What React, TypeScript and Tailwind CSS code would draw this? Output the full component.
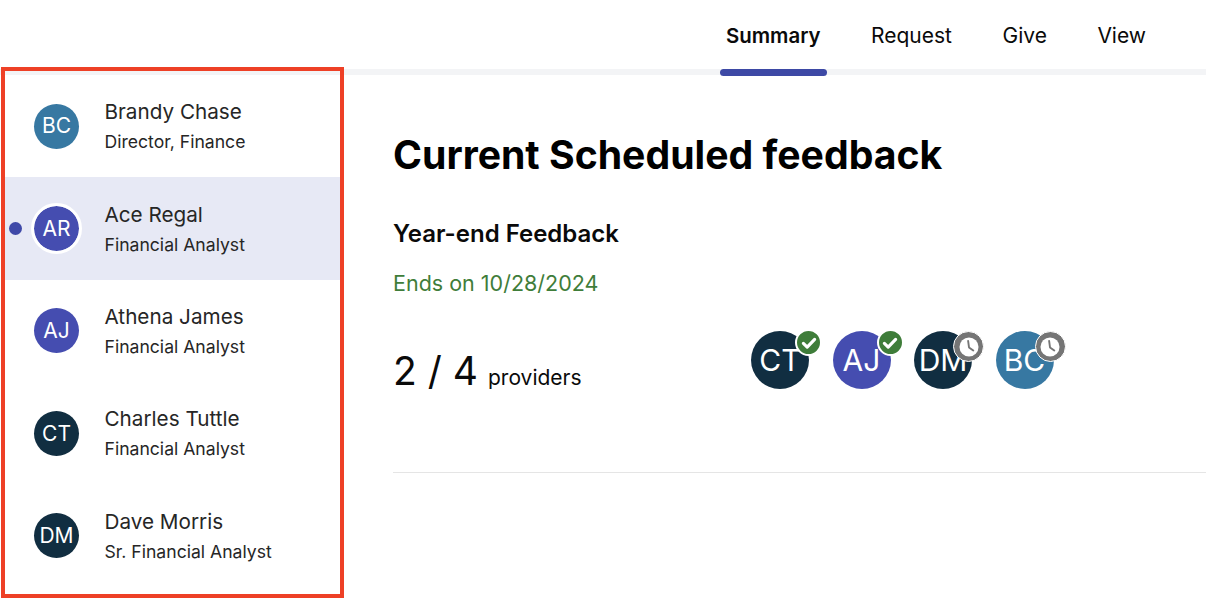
const people = [
  { i: "BC", name: "Brandy Chase", role: "Director, Finance", color: "bg-[#3778a2]", active: false },
  { i: "AR", name: "Ace Regal", role: "Financial Analyst", color: "bg-[#454db0]", active: true },
  { i: "AJ", name: "Athena James", role: "Financial Analyst", color: "bg-[#454db0]", active: false },
  { i: "CT", name: "Charles Tuttle", role: "Financial Analyst", color: "bg-[#112e41]", active: false },
  { i: "DM", name: "Dave Morris", role: "Sr. Financial Analyst", color: "bg-[#112e41]", active: false },
];

const providers = [
  { i: "CT", color: "bg-[#112e41]", done: true },
  { i: "AJ", color: "bg-[#454db0]", done: true },
  { i: "DM", color: "bg-[#112e41]", done: false },
  { i: "BC", color: "bg-[#3778a2]", done: false },
];

function Check() {
  return (
    <span className="absolute left-[44px] top-[-2px] flex h-[27px] w-[27px] items-center justify-center rounded-full border-2 border-white bg-[#3f7d3a]">
      <svg width="18" height="18" viewBox="0 0 16 16" fill="none">
        <path d="M3 8.3 6.4 11.6 13 4.8" stroke="white" strokeWidth="2.8" strokeLinecap="round" strokeLinejoin="round" />
      </svg>
    </span>
  );
}

function Clock() {
  return (
    <span className="absolute left-[39px] top-0 flex h-[31px] w-[31px] items-center justify-center rounded-full border border-white bg-[#757575]">
      <svg width="20" height="20" viewBox="0 0 21 21" fill="none">
        <circle cx="10.5" cy="10.5" r="10" fill="white" />
        <path d="M9.6 4.2 10.5 11 15 14.2" stroke="#757575" strokeWidth="2" strokeLinecap="round" strokeLinejoin="round" />
      </svg>
    </span>
  );
}

export default function App() {
  return (
    <div className="relative h-[600px] w-[1206px] overflow-hidden bg-white font-['Inter',sans-serif] text-[#0a0a0a]">
      <header className="flex h-[69px] items-start justify-end pr-[60px] pt-[22px] text-[21px] leading-[28px]">
        <nav className="flex gap-[50.5px]">
          <span className="text-[20.4px] font-semibold">Summary</span>
          <span>Request</span>
          <span>Give</span>
          <span>View</span>
        </nav>
      </header>
      <div className="relative h-[6px] bg-[#f3f4f6]">
        <div className="absolute left-[720px] top-0 h-[7px] w-[107px] rounded-[4px] bg-[#3d49a5]" />
      </div>
      <div className="flex">
        <aside className="w-[340px] shrink-0 pl-[4px]">
          {people.map((p) => (
            <div key={p.i} className={`relative flex h-[102.4px] items-center pl-[30px] ${p.active ? "bg-[#e7e9f5]" : ""}`}>
              {p.active && <span className="absolute left-[5px] top-[44.5px] h-[13px] w-[13px] rounded-full bg-[#3f49a8]" />}
              <div className={`flex h-[45px] w-[45px] shrink-0 items-center justify-center rounded-full text-[21px] text-white ${p.color} ${p.active ? "outline-[3px] outline-white" : ""}`}>
                {p.i}
              </div>
              <div className="ml-[25.5px] text-[#262626]">
                <div className="text-[20.7px] leading-[28px]">{p.name}</div>
                <div className="mt-[4px] text-[17.6px] leading-[24px]">{p.role}</div>
              </div>
            </div>
          ))}
        </aside>
        <main className="flex-1 pl-[53px] pt-[54px]">
          <h1 className="text-[39.2px] font-bold leading-[52px] text-black">Current Scheduled feedback</h1>
          <h2 className="mt-[37px] text-[24px] font-semibold leading-[32px]">Year-end Feedback</h2>
          <p className="mt-[19px] text-[21.5px] leading-[28px] text-[#3f7d3a]">Ends on 10/28/2024</p>
          <div className="mt-[34px] flex h-[58px] items-start">
            <div className="flex w-[358px] items-baseline pt-[12px]">
              <span className="text-[39px] leading-[56px]">2 / 4</span>
              <span className="ml-[10px] text-[21px] leading-[28px]">providers</span>
            </div>
            <div className="flex gap-[23.5px]">
              {providers.map((p) => (
                <div key={p.i} className={`relative flex h-[58px] w-[58px] items-center justify-center rounded-full text-[30px] text-white ${p.color}`}>
                  {p.i}
                  {p.done ? <Check /> : <Clock />}
                </div>
              ))}
            </div>
          </div>
          <div className="mt-[83px] h-px bg-[#e5e5e5]" />
        </main>
      </div>
      <div className="absolute left-[1px] top-[67px] h-[531px] w-[343px] border-4 border-[#ee4026]" />
    </div>
  );
}
